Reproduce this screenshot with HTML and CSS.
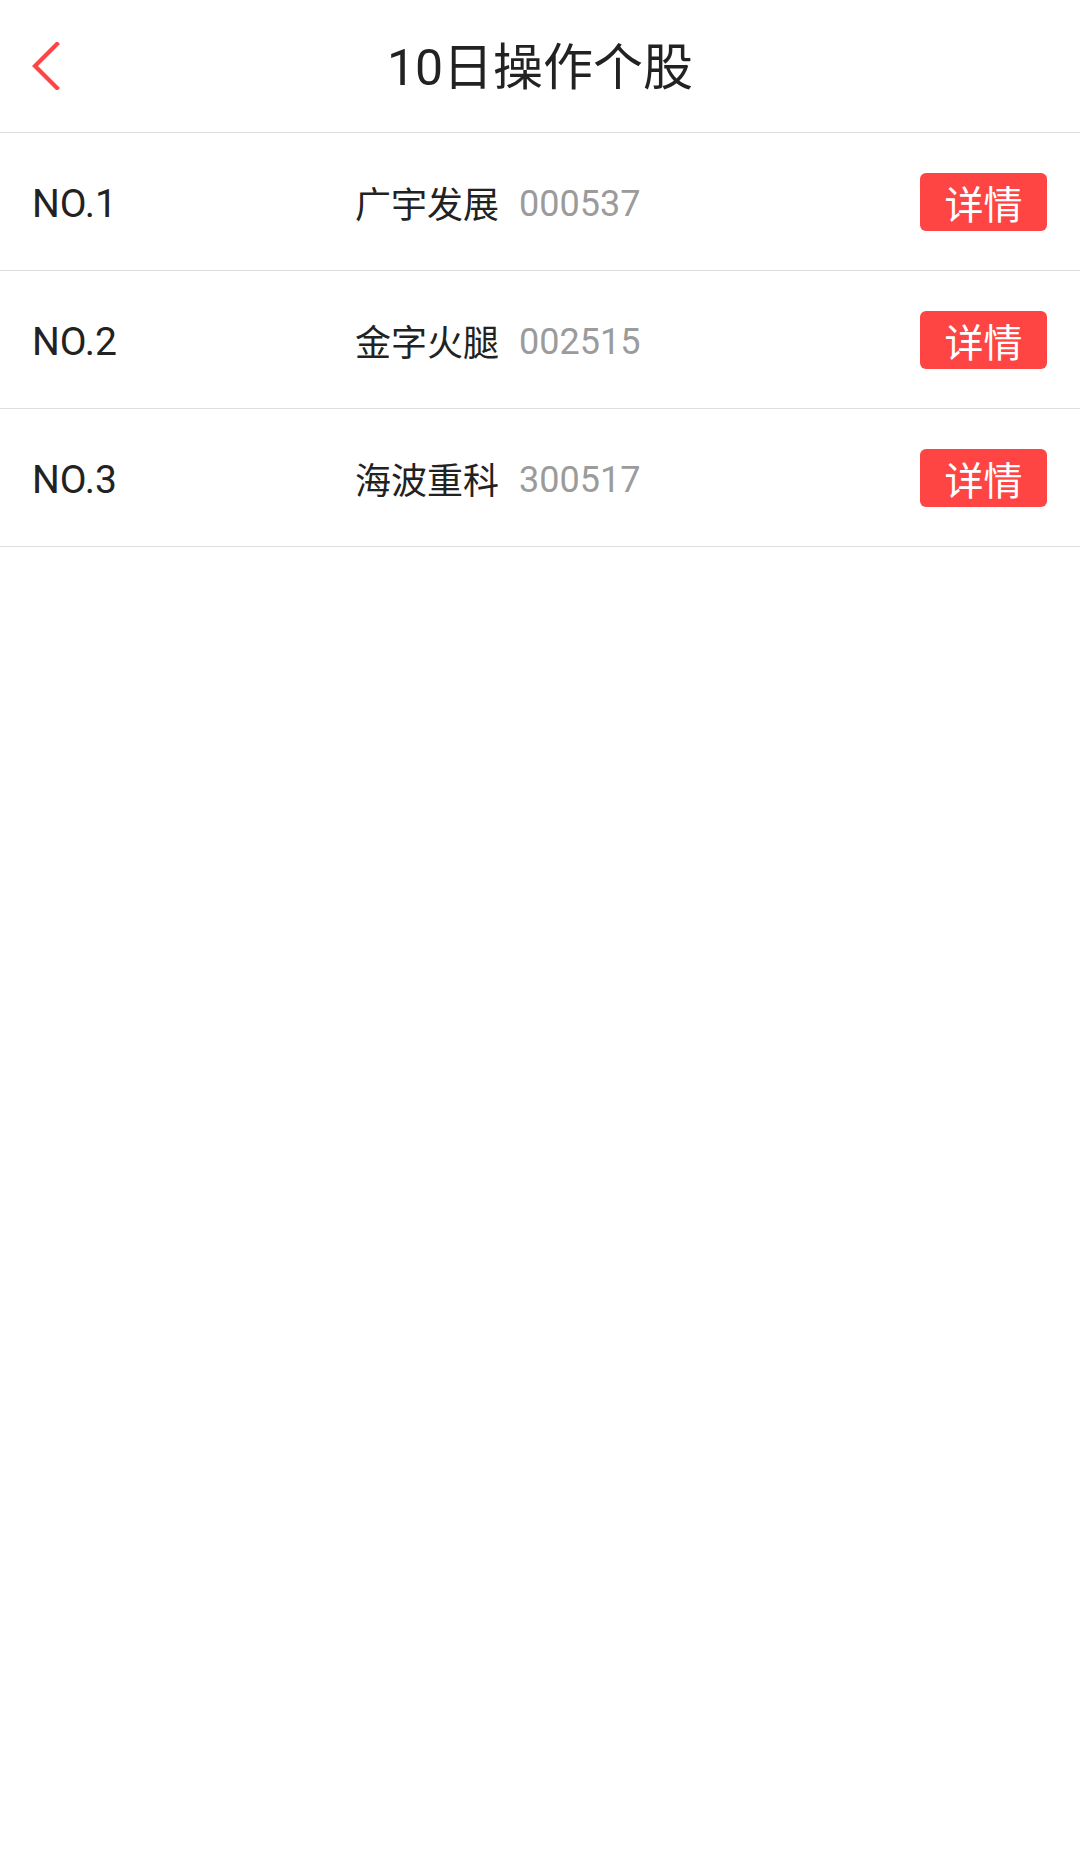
FILE: index.html
```html
<!DOCTYPE html>
<html lang="zh-CN">
<head>
<meta charset="utf-8">
<title>10日操作个股</title>
<link rel="stylesheet" href="styles.css">
</head>
<body>
<header class="topbar">
  <a class="back" href="#" aria-label="返回">
    <svg width="30" height="48" viewBox="0 0 30 48">
      <polyline points="25,2 3,24 25,46" fill="none" stroke="#ff4444" stroke-width="4.2" stroke-linecap="square" stroke-linejoin="miter"/>
    </svg>
  </a>
  <h1 class="title">10日操作个股</h1>
</header>
<main class="list">
  <div class="row">
    <span class="rank">NO.1</span>
    <span class="stock"><span class="name">广宇发展</span><span class="code">000537</span></span>
    <a class="detail" href="#">详情</a>
  </div>
  <div class="row">
    <span class="rank">NO.2</span>
    <span class="stock"><span class="name">金字火腿</span><span class="code">002515</span></span>
    <a class="detail" href="#">详情</a>
  </div>
  <div class="row">
    <span class="rank">NO.3</span>
    <span class="stock"><span class="name">海波重科</span><span class="code">300517</span></span>
    <a class="detail" href="#">详情</a>
  </div>
</main>
</body>
</html>
```
FILE: styles.css
```css
html, body {
  margin: 0;
  padding: 0;
  background: #ffffff;
}
body {
  font-family: "Roboto", "Noto Sans CJK SC", sans-serif;
  color: #222222;
}
.topbar {
  position: relative;
  height: 132px;
  border-bottom: 1px solid #dddddd;
  display: flex;
  align-items: center;
  justify-content: center;
}
.back {
  position: absolute;
  left: 32px;
  top: 42px;
  width: 30px;
  height: 48px;
  display: block;
}
.back svg {
  display: block;
}
.title {
  margin: 0;
  font-size: 50px;
  font-weight: 400;
  color: #222222;
  line-height: 1;
  padding-top: 4px;
}
.row {
  height: 137px;
  border-bottom: 1px solid #dddddd;
  display: grid;
  grid-template-columns: 323px 1fr auto;
  align-items: center;
  padding: 0 33px 0 32px;
}
.rank {
  font-size: 39px;
  color: #222222;
  padding-top: 5px;
}
.stock {
  display: flex;
  align-items: center;
}
.name {
  font-size: 36px;
  color: #222222;
}
.code {
  font-size: 36px;
  color: #9b9b9b;
  margin-left: 20px;
  padding-top: 5px;
}
.detail {
  display: flex;
  align-items: center;
  justify-content: center;
  width: 127px;
  height: 58px;
  border-radius: 6px;
  background: #ff4444;
  color: #ffffff;
  font-size: 39px;
  text-decoration: none;
  margin-top: 1px;
}
```
